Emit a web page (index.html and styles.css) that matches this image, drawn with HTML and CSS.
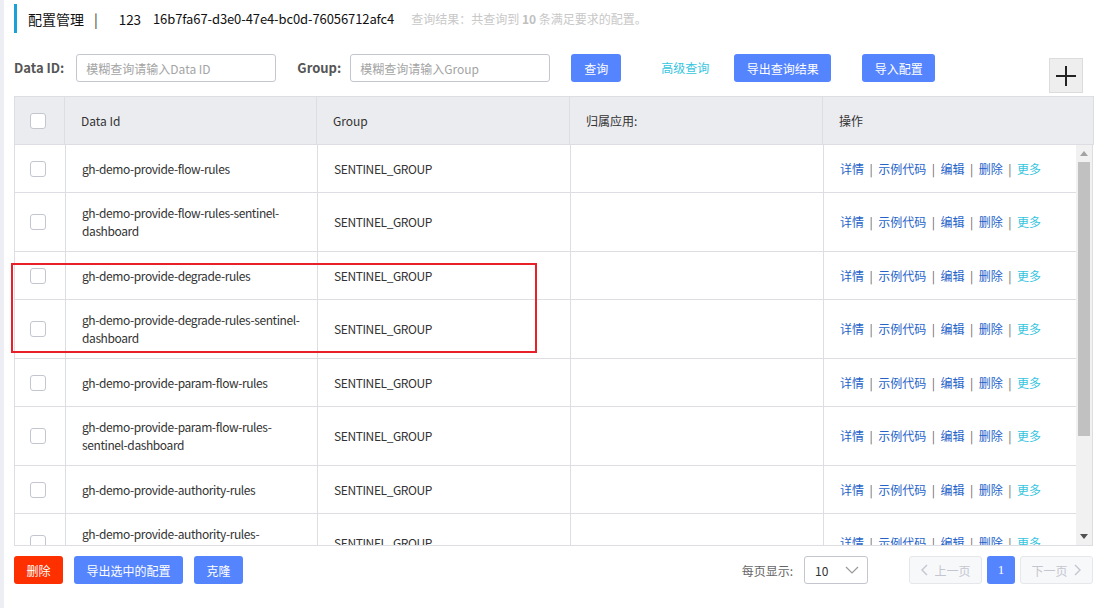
FILE: index.html
```html
<!DOCTYPE html>
<html lang="zh-CN">
<head>
<meta charset="utf-8">
<title>配置管理</title>
<link rel="stylesheet" href="styles.css">
</head>
<body>
<div class="page">
  <div class="strip"></div>
  <div class="main">
    <div class="title-row">
      <span class="title">配置管理</span>
      <span class="title-sep">|</span>
      <span class="ns">123</span>
      <span class="ns ns-id">16b7fa67-d3e0-47e4-bc0d-76056712afc4</span>
      <span class="result">查询结果：共查询到 <b>10</b> 条满足要求的配置。</span>
    </div>

    <div class="search-row">
      <label class="lbl">Data ID:</label>
      <input class="inp" type="text" placeholder="模糊查询请输入Data ID">
      <label class="lbl lbl-group">Group:</label>
      <input class="inp" type="text" placeholder="模糊查询请输入Group">
      <button class="btn btn-primary btn-query">查询</button>
      <a class="adv">高级查询</a>
      <button class="btn btn-primary btn-export">导出查询结果</button>
      <button class="btn btn-primary btn-import">导入配置</button>
      <div class="plus-box">
        <svg width="22" height="22" viewBox="0 0 22 22"><path d="M11 1v20M1 11h20" stroke="#222" stroke-width="2" fill="none"/></svg>
      </div>
    </div>

    <div class="grid">
      <table class="head">
        <colgroup><col class="c1"><col class="c2"><col class="c3"><col class="c4"><col class="c5h"></colgroup>
        <tr>
          <th><span class="cb"></span></th>
          <th>Data Id</th>
          <th>Group</th>
          <th>归属应用:</th>
          <th>操作</th>
        </tr>
      </table>
      <div class="body-wrap">
        <div class="viewport">
          <table class="body">
            <colgroup><col class="c1"><col class="c2"><col class="c3"><col class="c4"><col class="c5"></colgroup>
            <tr><td><span class="cb"></span></td><td class="txt">gh-demo-provide-flow-rules</td><td class="txt">SENTINEL_GROUP</td><td></td><td class="ops"><a>详情</a><i>|</i><a>示例代码</a><i>|</i><a>编辑</a><i>|</i><a>删除</a><i>|</i><a class="more">更多</a></td></tr>
            <tr><td><span class="cb"></span></td><td class="txt">gh-demo-provide-flow-rules-sentinel-dashboard</td><td class="txt">SENTINEL_GROUP</td><td></td><td class="ops"><a>详情</a><i>|</i><a>示例代码</a><i>|</i><a>编辑</a><i>|</i><a>删除</a><i>|</i><a class="more">更多</a></td></tr>
            <tr><td><span class="cb"></span></td><td class="txt">gh-demo-provide-degrade-rules</td><td class="txt">SENTINEL_GROUP</td><td></td><td class="ops"><a>详情</a><i>|</i><a>示例代码</a><i>|</i><a>编辑</a><i>|</i><a>删除</a><i>|</i><a class="more">更多</a></td></tr>
            <tr><td><span class="cb"></span></td><td class="txt">gh-demo-provide-degrade-rules-sentinel-dashboard</td><td class="txt">SENTINEL_GROUP</td><td></td><td class="ops"><a>详情</a><i>|</i><a>示例代码</a><i>|</i><a>编辑</a><i>|</i><a>删除</a><i>|</i><a class="more">更多</a></td></tr>
            <tr><td><span class="cb"></span></td><td class="txt">gh-demo-provide-param-flow-rules</td><td class="txt">SENTINEL_GROUP</td><td></td><td class="ops"><a>详情</a><i>|</i><a>示例代码</a><i>|</i><a>编辑</a><i>|</i><a>删除</a><i>|</i><a class="more">更多</a></td></tr>
            <tr><td><span class="cb"></span></td><td class="txt">gh-demo-provide-param-flow-rules-sentinel-dashboard</td><td class="txt">SENTINEL_GROUP</td><td></td><td class="ops"><a>详情</a><i>|</i><a>示例代码</a><i>|</i><a>编辑</a><i>|</i><a>删除</a><i>|</i><a class="more">更多</a></td></tr>
            <tr><td><span class="cb"></span></td><td class="txt">gh-demo-provide-authority-rules</td><td class="txt">SENTINEL_GROUP</td><td></td><td class="ops"><a>详情</a><i>|</i><a>示例代码</a><i>|</i><a>编辑</a><i>|</i><a>删除</a><i>|</i><a class="more">更多</a></td></tr>
            <tr><td><span class="cb"></span></td><td class="txt">gh-demo-provide-authority-rules-sentinel-dashboard</td><td class="txt">SENTINEL_GROUP</td><td></td><td class="ops"><a>详情</a><i>|</i><a>示例代码</a><i>|</i><a>编辑</a><i>|</i><a>删除</a><i>|</i><a class="more">更多</a></td></tr>
          </table>
        </div>
        <div class="scrollbar">
          <div class="sb-arrow"><svg width="8" height="5" viewBox="0 0 8 5"><path d="M0 5L4 0L8 5Z" fill="#a3a3a3"/></svg></div>
          <div class="sb-track"><div class="sb-thumb"></div></div>
          <div class="sb-arrow"><svg width="8" height="5" viewBox="0 0 8 5"><path d="M0 0L4 5L8 0Z" fill="#505050"/></svg></div>
        </div>
      </div>
      <div class="highlight"></div>
    </div>

    <div class="footer">
      <button class="btn btn-danger">删除</button>
      <button class="btn btn-primary btn-export-sel">导出选中的配置</button>
      <button class="btn btn-primary btn-clone">克隆</button>
      <div class="pager">
        <span class="per">每页显示:</span>
        <div class="select"><span>10</span>
          <svg width="14" height="8" viewBox="0 0 14 8"><path d="M1 1L7 7L13 1" stroke="#999" stroke-width="1.2" fill="none"/></svg>
        </div>
        <button class="pg pg-prev"><svg width="8" height="12" viewBox="0 0 8 12"><path d="M7 1L2 6L7 11" stroke="#c4c6cf" stroke-width="1.4" fill="none"/></svg>上一页</button>
        <button class="pg pg-cur">1</button>
        <button class="pg pg-next">下一页<svg width="8" height="12" viewBox="0 0 8 12"><path d="M1 1L6 6L1 11" stroke="#c4c6cf" stroke-width="1.4" fill="none"/></svg></button>
      </div>
    </div>
  </div>
</div>
</body>
</html>
```

FILE: styles.css
```css
* { box-sizing: border-box; }
html, body { margin: 0; padding: 0; background: #fff; }
body {
  font-family: "Noto Sans CJK SC", "Noto Sans", sans-serif;
  font-size: 12px;
  color: #333;
  width: 1104px;
  height: 608px;
  overflow: hidden;
}
.page { display: flex; height: 608px; }
.strip { width: 4px; background: #eceef3; flex: none; }
.main { flex: 1; padding: 0 11px 0 10px; }

.title-row {
  margin-top: 4px;
  height: 29px;
  border-left: 3px solid #1ba1d8;
  padding-left: 11px;
  display: flex;
  align-items: center;
  white-space: nowrap;
}
.title { font-size: 14px; color: #111; }
.title-sep { font-size: 14px; color: #333; margin: 0 21px 0 10px; }
.ns { font-size: 13.5px; color: #111; letter-spacing: -0.1px; }
.ns-id { font-size: 13px; margin-left: 12px; }
.result { font-size: 12px; color: #c8c8c8; margin-left: 17px; }
.result b { font-weight: bold; color: #c0c0c0; }

.search-row {
  display: flex;
  align-items: flex-start;
  margin-top: 21px;
  height: 42px;
}
.lbl {
  font-weight: bold;
  color: #555;
  font-size: 13px;
  line-height: 28px;
  margin-right: 12px;
}
.lbl-group { margin-left: 21px; margin-right: 9px; }
.inp {
  width: 200px;
  height: 28px;
  border: 1px solid #c4c6cf;
  border-radius: 3px;
  padding: 0 9px;
  font-family: inherit;
  font-size: 12px;
  color: #333;
  outline: none;
}
.inp::placeholder { color: #a4a4a4; }
.btn {
  height: 28px;
  border: none;
  border-radius: 3px;
  font-family: inherit;
  font-size: 12px;
  color: #fff;
  padding: 0;
  cursor: pointer;
}
.btn-primary { background: #5584ff; }
.btn-danger { background: #ff3000; width: 49px; }
.btn-query { width: 50px; margin-left: 21px; }
.adv {
  color: #36c5e0;
  line-height: 28px;
  margin-left: 40px;
  margin-right: 25px;
}
.btn-export { width: 97px; }
.btn-import { width: 73px; margin-left: 31px; }
.plus-box {
  margin-left: auto;
  margin-right: 10px;
  margin-top: 4px;
  width: 34px;
  height: 35px;
  background: #eeeeee;
  border: 1px solid #dcdcdc;
  display: flex;
  align-items: center;
  justify-content: center;
}

.grid { position: relative; width: 1079px; }
table { border-collapse: separate; border-spacing: 0; table-layout: fixed; }
.head { width: 1079px; background: #ebecf0; border-top: 1px solid #dcdee3; border-left: 1px solid #dcdee3; border-right: 1px solid #dcdee3; }
.head th {
  height: 48px;
  font-weight: normal;
  text-align: left;
  padding: 0 16px 1px;
  color: #333;
  border-bottom: 1px solid #dcdee3;
  border-right: 1px solid #dcdee3;
}
.head th:last-child { border-right: none; }
col.c1 { width: 51px; }
col.c2 { width: 252px; }
col.c3 { width: 253px; }
col.c4 { width: 253px; }
col.c5h { width: 270px; }
col.c5 { width: 253px; }
.head col.c1 { width: 50px; }

.body-wrap {
  display: flex;
  height: 401px;
  border-left: 1px solid #dcdee3;
  border-right: 1px solid #dcdee3;
  border-bottom: 1px solid #dcdee3;
}
.viewport { width: 1062px; height: 400px; overflow: hidden; }
.body { width: 1062px; }
.body td {
  height: 48px;
  padding: 11px 15px 11px 16px;
  line-height: 18px;
  vertical-align: middle;
  border-bottom: 1px solid #dcdee3;
  border-right: 1px solid #dcdee3;
  color: #333;
}
.body td.txt { letter-spacing: -0.4px; }
.body td:first-child, .head th:first-child { padding: 0 0 0 15px; }
.body td:first-child { padding-top: 11px; padding-bottom: 11px; }
.cb {
  display: block;
  width: 16px;
  height: 16px;
  border: 1px solid #c4c6cf;
  border-radius: 3px;
  background: #fff;
}
.ops { white-space: nowrap; }
.ops a { color: #2563c9; }
.ops a.more { color: #36c5e0; }
.ops i { font-style: normal; color: #666; margin: 0 5.5px; }

.highlight {
  position: absolute;
  left: -3px;
  top: 167px;
  width: 526px;
  height: 90px;
  border: 2px solid #e8202a;
  pointer-events: none;
}

.scrollbar {
  width: 16px;
  height: 400px;
  background: #f1f1f1;
  display: flex;
  flex-direction: column;
}
.sb-arrow { height: 17px; display: flex; align-items: center; justify-content: center; }
.sb-track { flex: 1; padding: 0 2px; }
.sb-thumb { height: 274px; background: #c1c1c1; }

.footer {
  display: flex;
  align-items: center;
  margin-top: 10px;
  gap: 11px;
}
.btn-export-sel { width: 109px; }
.btn-clone { width: 49px; }
.pager { margin-left: auto; display: flex; align-items: center; }
.per { color: #666; margin-right: 11px; }
.select {
  width: 64px;
  height: 28px;
  border: 1px solid #c4c6cf;
  border-radius: 3px;
  display: flex;
  align-items: center;
  justify-content: space-between;
  padding: 0 8px 0 10px;
  color: #333;
  margin-right: 41px;
}
.pg {
  height: 28px;
  border-radius: 3px;
  font-family: inherit;
  font-size: 12px;
  padding: 0;
  display: flex;
  align-items: center;
  justify-content: center;
  gap: 6px;
}
.pg-prev, .pg-next {
  width: 73px;
  background: #f7f8fa;
  border: 1px solid #e6e7eb;
  color: #c4c6cf;
}
.pg-cur {
  width: 28px;
  margin: 0 5px;
  background: #5584ff;
  border: none;
  color: #fff;
  font-family: "Liberation Serif", serif;
  font-size: 13px;
}
```
